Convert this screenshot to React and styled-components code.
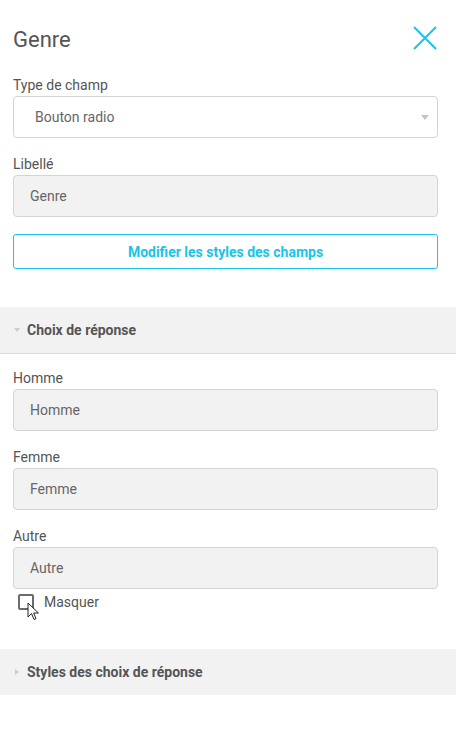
import React from "react"
import styled, { createGlobalStyle } from "styled-components"

const GlobalStyle = createGlobalStyle`
body{
  margin:0;
  background:#fff;
  font-family:Roboto, "Liberation Sans", sans-serif;
  color:#555;
}
`

const fields = [
  { label: "Homme", value: "Homme" },
  { label: "Femme", value: "Femme" },
  { label: "Autre", value: "Autre", hide: true },
]

const CloseIcon = () => (
  <svg width="24" height="24" viewBox="0 0 24 24">
    <path d="M1 1 L23 23 M23 1 L1 23" stroke="#1cc3e6" strokeWidth="2" fill="none" />
  </svg>
)

const Cursor = () => (
  <svg width="13" height="20" viewBox="0 0 13 20">
    <path d="M1 1 L1 15 L4.5 11.5 L7 17.5 L9 16.6 L6.6 11 L11.5 11 Z" fill="#fff" stroke="#222" strokeWidth="1" strokeLinejoin="round" />
  </svg>
)

const App = () => {
  return (
    <Panel>
      <GlobalStyle />
      <Header>
        <Title>Genre</Title>
        <Close><CloseIcon /></Close>
      </Header>
      <Body>
        <Field>
          <Label>Type de champ</Label>
          <Select>
            <span>Bouton radio</span>
            <Caret />
          </Select>
        </Field>
        <Field>
          <Label>Libellé</Label>
          <Input>Genre</Input>
        </Field>
        <OutlineButton>Modifier les styles des champs</OutlineButton>
      </Body>

      <Section>
        <SectionHead open>
          <Arrow open />
          Choix de réponse
        </SectionHead>
        <SectionBody>
          {fields.map((f) => (
            <Field key={f.label}>
              <Label>{f.label}</Label>
              <Input>{f.value}</Input>
              {f.hide && (
                <Check>
                  <Box>
                    <CursorWrap><Cursor /></CursorWrap>
                  </Box>
                  Masquer
                </Check>
              )}
            </Field>
          ))}
        </SectionBody>
      </Section>

      <SectionHead>
        <Arrow />
        Styles des choix de réponse
      </SectionHead>
    </Panel>
  )
}
export default App

const Panel = styled.div`
width:456px;
min-height:730px;
background:#fff;
`
const Header = styled.div`
display:flex;
align-items:center;
justify-content:space-between;
padding:24px 19px 0 13px;
height:30px;
margin-bottom:23px;
`
const Title = styled.h1`
margin:0;
font-size:22px;
font-weight:400;
color:#555;
`
const Close = styled.div`
display:flex;
margin-top:-3px;
`
const Body = styled.div`
padding:0 18px 0 13px;
display:flex;
flex-direction:column;
gap:18px;
`
const Field = styled.div`
display:flex;
flex-direction:column;
`
const Label = styled.div`
font-size:14px;
line-height:17px;
color:#555;
margin-bottom:2px;
`
const Select = styled.div`
height:40px;
border:1px solid #d4d4d4;
border-radius:4px;
background:#fff;
display:flex;
align-items:center;
justify-content:space-between;
padding:0 8px 0 21px;
font-size:14px;
color:#666;
`
const Caret = styled.div`
width:0;
height:0;
border-left:4px solid transparent;
border-right:4px solid transparent;
border-top:5px solid #c4c4c4;
`
const Input = styled.div`
height:40px;
border:1px solid #d4d4d4;
border-radius:4px;
background:#f2f2f2;
display:flex;
align-items:center;
padding:0 16px;
font-size:14px;
color:#666;
`
const OutlineButton = styled.div`
height:33px;
border:1px solid #19c4e8;
border-radius:3px;
display:flex;
align-items:center;
justify-content:center;
font-size:14px;
font-weight:700;
color:#19c4e8;
margin-top:-1px;
`
const Section = styled.div`
margin-top:38px;
`
const SectionHead = styled.div`
height:46px;
background:#f2f2f2;
border-bottom:${(p) => (p.open ? "1px solid #dedede" : "none")};
display:flex;
align-items:center;
padding-left:13px;
font-size:14px;
font-weight:700;
color:#555;
`
const Arrow = styled.div`
width:0;
height:0;
margin-right:7px;
${(p) =>
  p.open
    ? `border-left:3.5px solid transparent;border-right:3.5px solid transparent;border-top:4px solid #ccc;margin-left:1px;`
    : `border-top:3.5px solid transparent;border-bottom:3.5px solid transparent;border-left:4px solid #ccc;margin-left:2px;margin-right:8px;`}
`
const SectionBody = styled.div`
padding:16px 18px 39px 13px;
display:flex;
flex-direction:column;
gap:18px;
`
const Check = styled.div`
display:flex;
align-items:center;
gap:10px;
padding:5px 0 0 5px;
font-size:14px;
color:#555;
`
const Box = styled.div`
position:relative;
width:12px;
height:12px;
border:2px solid #6a6a72;
border-radius:2px;
background:#fff;
`
const CursorWrap = styled.div`
position:absolute;
left:7px;
top:6px;
display:flex;
`
